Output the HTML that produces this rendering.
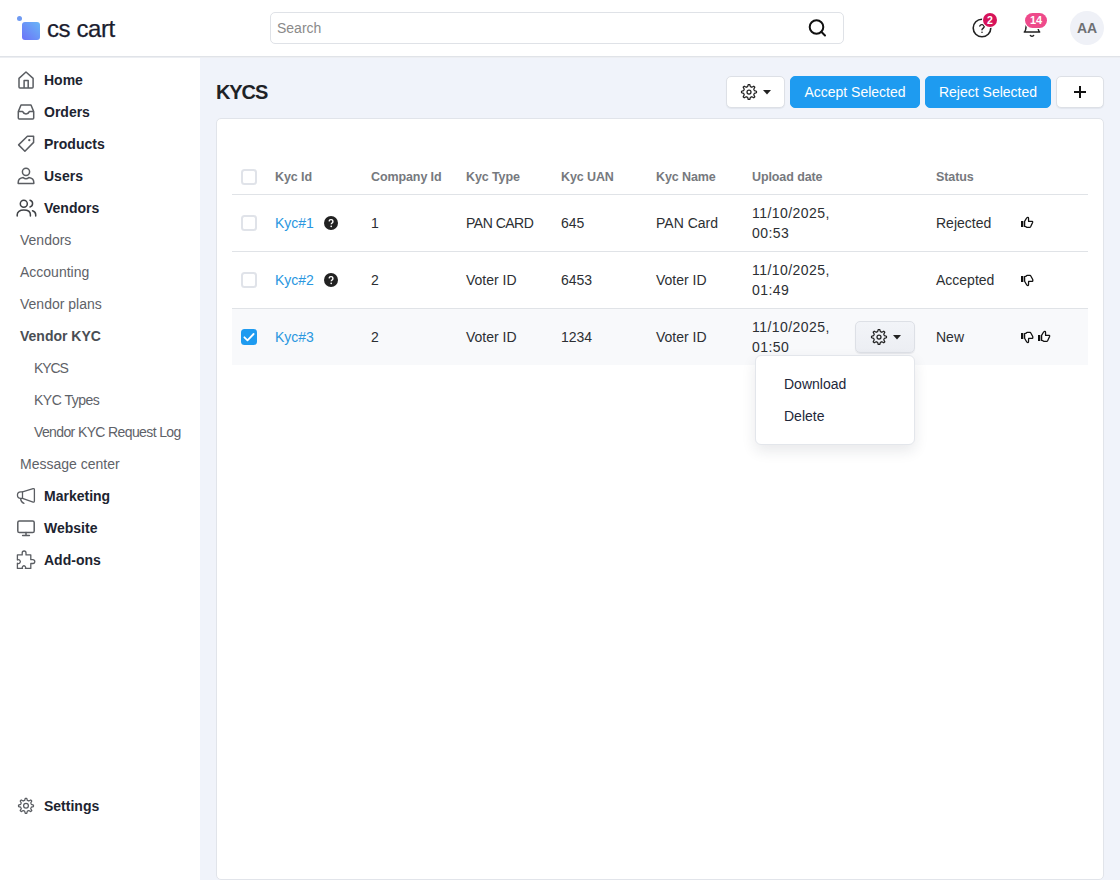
<!DOCTYPE html>
<html><head><meta charset="utf-8">
<style>
*{box-sizing:border-box;margin:0;padding:0}
html,body{width:1120px;height:880px;overflow:hidden}
body{font-family:"Liberation Sans",sans-serif;background:#f0f3fa;position:relative;color:#222}
.abs{position:absolute}
#hdr{left:0;top:0;width:1120px;height:57px;background:#fff;border-bottom:1px solid #e0e3e8;}
#side{left:0;top:57px;width:200px;height:823px;background:#fff}
.logo-dot{left:17px;top:16px;width:5px;height:5px;border-radius:50%;background:#6f9af2}
.logo-sq{left:22px;top:22px;width:18px;height:18px;border-radius:3px;background:linear-gradient(45deg,#6c72f7,#69b6f7)}
.logo-txt{left:47px;top:14.5px;font-size:24px;color:#1b1d2f;letter-spacing:-0.4px;line-height:28px;-webkit-text-stroke:0.25px #1b1d2f}
#search{left:270px;top:12px;width:574px;height:32px;border:1px solid #dfe2e7;border-radius:5px;background:#fff}
#search span{position:absolute;left:6px;top:7px;font-size:14px;color:#8a8a8a;line-height:16px}
.nav{position:absolute;left:44px;font-size:14px;font-weight:bold;color:#1d2430;line-height:16px}
.sub{position:absolute;left:20px;font-size:14px;color:#5e6268;line-height:16px}
.sub2{left:34px}
.ico{position:absolute;left:16px}
h1{position:absolute;left:216px;top:80px;font-size:20px;font-weight:bold;color:#1e2226;line-height:24px;letter-spacing:-1.1px}
.btn{position:absolute;top:76px;height:32px;border-radius:5px;font-size:14px;line-height:30px;text-align:center}
.btn-w{background:#fff;border:1px solid #dde0e6;box-shadow:0 1px 1px rgba(20,30,50,.06)}
.btn-b{background:#1e9bf0;border:1px solid #1e9bf0;color:#fff}
#card{left:216px;top:118px;width:888px;height:762px;background:#fff;border:1px solid #e1e4ea;border-radius:5px}
.th{position:absolute;top:170px;font-size:12.5px;font-weight:bold;color:#76797e;line-height:15px;letter-spacing:-0.1px}
.hline{position:absolute;left:232px;width:856px;height:1px;background:#e0e3e7}
.td{position:absolute;font-size:14px;color:#2c2f33;line-height:16px}
.lnk{color:#2a97df}
.cb{position:absolute;left:241px;width:16px;height:16px;border:2px solid #e0e3e9;border-radius:3.5px;background:#fff}
</style></head><body>
<div id="hdr" class="abs"></div>
<div id="side" class="abs"></div>
<div class="abs" style="left:0;top:57px;width:1120px;height:1px;background:#eceef2"></div>
<div class="abs logo-dot"></div>
<div class="abs logo-sq"></div>
<div class="abs logo-txt">cs cart</div>
<div id="search" class="abs"><span>Search</span></div>

<div class="nav" style="top:72px">Home</div>
<div class="nav" style="top:104px">Orders</div>
<div class="nav" style="top:136px">Products</div>
<div class="nav" style="top:168px">Users</div>
<div class="nav" style="top:200px">Vendors</div>
<div class="sub" style="top:232px">Vendors</div>
<div class="sub" style="top:264px">Accounting</div>
<div class="sub" style="top:296px">Vendor plans</div>
<div class="sub" style="top:328px;font-weight:bold;color:#4a4e54">Vendor KYC</div>
<div class="sub sub2" style="top:360px;letter-spacing:-1.1px">KYCS</div>
<div class="sub sub2" style="top:392px;letter-spacing:-0.5px">KYC Types</div>
<div class="sub sub2" style="top:424px;letter-spacing:-0.62px">Vendor KYC Request Log</div>
<div class="sub" style="top:456px">Message center</div>
<div class="nav" style="top:488px">Marketing</div>
<div class="nav" style="top:520px">Website</div>
<div class="nav" style="top:552px">Add-ons</div>
<div class="nav" style="top:798px">Settings</div>

<h1>KYCS</h1>
<div class="btn btn-w" style="left:726px;width:59px"></div>
<div class="btn btn-b" style="left:790px;width:130px">Accept Selected</div>
<div class="btn btn-b" style="left:925px;width:126px">Reject Selected</div>
<div class="btn btn-w" style="left:1056px;width:48px"></div>

<div id="card" class="abs"></div>
<div class="cb" style="top:169px"></div>
<div class="th" style="left:275px">Kyc Id</div>
<div class="th" style="left:371px">Company Id</div>
<div class="th" style="left:466px">Kyc Type</div>
<div class="th" style="left:561px">Kyc UAN</div>
<div class="th" style="left:656px">Kyc Name</div>
<div class="th" style="left:752px">Upload date</div>
<div class="th" style="left:936px">Status</div>
<div class="hline" style="top:194px"></div>
<div class="hline" style="top:251px"></div>
<div class="hline" style="top:308px"></div>


<!-- header icons -->
<svg class="abs" style="left:806px;top:17px" width="22" height="22" viewBox="0 0 22 22"><circle cx="10.5" cy="10" r="6.8" fill="none" stroke="#111" stroke-width="2"/><line x1="15.3" y1="14.8" x2="19" y2="18.5" stroke="#111" stroke-width="2" stroke-linecap="round"/></svg>
<svg class="abs" style="left:970px;top:16px" width="24" height="24" viewBox="0 0 24 24"><circle cx="12" cy="12" r="8.8" fill="none" stroke="#222" stroke-width="1.6"/><path d="M9.8 10a2.3 2.3 0 0 1 4.4.6c0 1.5-2.2 2-2.2 3.2" fill="none" stroke="#222" stroke-width="1.4" stroke-linecap="round"/><circle cx="12" cy="16.2" r=".8" fill="#222"/></svg>
<div class="abs" style="left:983px;top:13px;width:14px;height:14px;border-radius:7px;background:#d6135a;box-shadow:0 0 0 1px #fff;color:#fff;font-size:10.5px;font-weight:bold;text-align:center;line-height:14px">2</div>
<svg class="abs" style="left:1020px;top:14px" width="24" height="26" viewBox="0 0 24 26" fill="none" stroke="#222" stroke-width="1.5" stroke-linejoin="round" stroke-linecap="round"><path d="M6.8 8L5.7 15.4Q5.3 17.3 4.3 18.1H19.7Q18.7 17.3 18.3 15.4L17.2 8"/><path d="M10.4 21.5Q12 23 13.6 21.5"/></svg>
<div class="abs" style="left:1025px;top:13px;width:22px;height:15px;border-radius:8px;background:#ee4a8b;box-shadow:0 0 0 1px #fff;color:#fff;font-size:11px;font-weight:bold;text-align:center;line-height:15px;letter-spacing:-0.2px">14</div>
<div class="abs" style="left:1070px;top:11px;width:34px;height:34px;border-radius:17px;background:#eff1f7;color:#6e7074;font-size:14px;font-weight:bold;text-align:center;line-height:35px">AA</div>

<!-- sidebar icons -->
<svg class="abs" style="left:16px;top:70px" width="20" height="20" viewBox="0 0 20 20" fill="none" stroke="#5a5d62" stroke-width="1.5" stroke-linejoin="round"><path d="M3 8.4L10 2l7.1 6.4v8.6c0 .6-.4 1-1 1H4c-.6 0-1-.4-1-1z"/><path d="M8.1 17.9V10.4H12.2V17.9"/></svg>
<svg class="abs" style="left:16px;top:102px" width="20" height="20" viewBox="0 0 20 20" fill="none" stroke="#5a5d62" stroke-width="1.5" stroke-linejoin="round"><path d="M5 3h10l2.7 6.6V16c0 .7-.4 1-1 1H3.3c-.6 0-1-.3-1-1V9.6z"/><path d="M2.4 9.6h4.3c.6 1.5 1.7 2.3 3.3 2.3s2.7-.8 3.3-2.3h4.3"/></svg>
<svg class="abs" style="left:16px;top:134px" width="20" height="20" viewBox="0 0 20 20" fill="none" stroke="#5a5d62" stroke-width="1.5" stroke-linejoin="round"><path d="M11.4 2.2h6.2v6.2L8.9 17.2 2.6 10.9z"/><circle cx="13.3" cy="6.2" r="1.15" fill="#5a5d62" stroke="none"/></svg>
<svg class="abs" style="left:16px;top:166px" width="20" height="20" viewBox="0 0 20 20" fill="none" stroke="#5a5d62" stroke-width="1.5" stroke-linejoin="round"><circle cx="10" cy="5.8" r="3.6"/><path d="M7.2 11.6c-2.5.4-5 1.8-5 4.8v1.2h15.6v-1.2c0-3-2.5-4.4-5-4.8-.9.8-1.8 1.2-2.8 1.2s-1.9-.4-2.8-1.2z"/></svg>
<svg class="abs" style="left:16px;top:198px" width="22" height="20" viewBox="0 0 22 20" fill="none" stroke="#3f4246" stroke-width="1.5" stroke-linecap="round" stroke-linejoin="round"><circle cx="7.8" cy="5.7" r="3.5"/><path d="M14 2.3a3.4 3.4 0 0 1 0 6.6"/><path d="M1.2 18v-1.3c0-2.8 2.5-4.7 6.6-4.7s6.6 1.9 6.6 4.7V18"/><path d="M16.5 12.8c2 .6 3.2 2 3.2 3.9V18"/></svg>
<svg class="abs" style="left:12px;top:484px" width="28" height="24" viewBox="0 0 28 24" fill="none" stroke="#5a5d62" stroke-width="1.3" stroke-linejoin="round" stroke-linecap="round"><path d="M10.5 7.8L21.1 4.7Q22.4 4.4 22.4 5.7V17.1Q22.4 18.4 21.1 18.1L10.5 14.3Z"/><path d="M10.5 7.8H8.7a3.25 3.25 0 0 0 0 6.5H10.5"/><path d="M8.6 14.6Q8.8 18.2 12 19.3"/></svg>
<svg class="abs" style="left:16px;top:518px" width="20" height="20" viewBox="0 0 20 20" fill="none" stroke="#5a5d62" stroke-width="1.5" stroke-linejoin="round" stroke-linecap="round"><rect x="1.8" y="3" width="16.4" height="11.6" rx="1.6"/><path d="M10 14.6v3M6.6 17.6h6.8"/></svg>
<svg class="abs" style="left:12px;top:546px" width="28" height="28" viewBox="0 0 28 28" fill="none" stroke="#5a5d62" stroke-width="1.3" stroke-linejoin="round"><path d="M5.4 8.9H10.2V6.9A1.9 1.9 0 0 1 14 6.9V8.9H18.8V13.7H20.9A1.9 1.9 0 0 1 20.9 17.5H18.8V22.4H13.4A1.7 1.7 0 1 0 10.5 22.4H5.4V17.2A1.9 1.9 0 1 0 5.4 14Z"/></svg>
<svg class="abs" style="left:12px;top:792px" width="28" height="28" viewBox="0 0 28 28" fill="none" stroke="#5a5d62" stroke-width="1.25" stroke-linejoin="round"><path d="M12.63 8.47 L13.24 6.34 A7.50 7.50 0 0 1 14.76 6.34 L15.37 8.47 A5.50 5.50 0 0 1 16.80 9.07 L16.80 9.07 L18.74 7.98 A7.50 7.50 0 0 1 19.82 9.06 L18.73 11.00 A5.50 5.50 0 0 1 19.33 12.43 L19.33 12.43 L21.46 13.04 A7.50 7.50 0 0 1 21.46 14.56 L19.33 15.17 A5.50 5.50 0 0 1 18.73 16.60 L18.73 16.60 L19.82 18.54 A7.50 7.50 0 0 1 18.74 19.62 L16.80 18.53 A5.50 5.50 0 0 1 15.37 19.13 L15.37 19.13 L14.76 21.26 A7.50 7.50 0 0 1 13.24 21.26 L12.63 19.13 A5.50 5.50 0 0 1 11.20 18.53 L11.20 18.53 L9.26 19.62 A7.50 7.50 0 0 1 8.18 18.54 L9.27 16.60 A5.50 5.50 0 0 1 8.67 15.17 L8.67 15.17 L6.54 14.56 A7.50 7.50 0 0 1 6.54 13.04 L8.67 12.43 A5.50 5.50 0 0 1 9.27 11.00 L9.27 11.00 L8.18 9.06 A7.50 7.50 0 0 1 9.26 7.98 L11.20 9.07 A5.50 5.50 0 0 1 12.63 8.47 Z"/><circle cx="14" cy="13.8" r="2.4"/></svg>

<!-- toolbar icons -->
<svg class="abs" style="left:740px;top:83px" width="18" height="18" viewBox="0 0 18 18" fill="none" stroke="#222" stroke-width="1.25" stroke-linejoin="round"><path d="M7.63 3.67 L8.24 1.54 A7.50 7.50 0 0 1 9.76 1.54 L10.37 3.67 A5.50 5.50 0 0 1 11.80 4.27 L11.80 4.27 L13.74 3.18 A7.50 7.50 0 0 1 14.82 4.26 L13.73 6.20 A5.50 5.50 0 0 1 14.33 7.63 L14.33 7.63 L16.46 8.24 A7.50 7.50 0 0 1 16.46 9.76 L14.33 10.37 A5.50 5.50 0 0 1 13.73 11.80 L13.73 11.80 L14.82 13.74 A7.50 7.50 0 0 1 13.74 14.82 L11.80 13.73 A5.50 5.50 0 0 1 10.37 14.33 L10.37 14.33 L9.76 16.46 A7.50 7.50 0 0 1 8.24 16.46 L7.63 14.33 A5.50 5.50 0 0 1 6.20 13.73 L6.20 13.73 L4.26 14.82 A7.50 7.50 0 0 1 3.18 13.74 L4.27 11.80 A5.50 5.50 0 0 1 3.67 10.37 L3.67 10.37 L1.54 9.76 A7.50 7.50 0 0 1 1.54 8.24 L3.67 7.63 A5.50 5.50 0 0 1 4.27 6.20 L4.27 6.20 L3.18 4.26 A7.50 7.50 0 0 1 4.26 3.18 L6.20 4.27 A5.50 5.50 0 0 1 7.63 3.67 Z"/><circle cx="9" cy="9" r="2.0"/></svg>
<svg class="abs" style="left:763px;top:90px" width="8" height="5" viewBox="0 0 8 5"><path d="M0 0h8L4 4.5z" fill="#222"/></svg>
<svg class="abs" style="left:1073px;top:85px" width="14" height="14" viewBox="0 0 14 14"><path d="M7 1v12M1 7h12" stroke="#111" stroke-width="2"/></svg>

<!-- rows -->
<div class="abs" style="left:232px;top:309px;width:856px;height:56px;background:#f8f9fb"></div>
<div class="cb" style="top:215px"></div>
<div class="cb" style="top:272px"></div>
<div class="abs" style="left:241px;top:329px;width:16px;height:16px;border-radius:3.5px;background:#1e9bf0"></div>
<svg class="abs" style="left:241px;top:329px" width="16" height="16" viewBox="0 0 16 16"><path d="M3.4 8.3l3.1 3 6.1-6.3" fill="none" stroke="#fff" stroke-width="1.8" stroke-linecap="round" stroke-linejoin="round"/></svg>

<div class="td lnk" style="left:275px;top:215px">Kyc#1</div>
<div class="td lnk" style="left:275px;top:272px">Kyc#2</div>
<div class="td lnk" style="left:275px;top:329px">Kyc#3</div>
<svg class="abs" style="left:324px;top:216px" width="14" height="14" viewBox="0 0 14 14"><circle cx="7" cy="7" r="7" fill="#222"/><path d="M5.1 5.4a1.9 1.9 0 0 1 3.8.3c0 1.2-1.7 1.4-1.7 2.6" fill="none" stroke="#fff" stroke-width="1.4"/><circle cx="7.2" cy="10.3" r=".85" fill="#fff"/></svg>
<svg class="abs" style="left:324px;top:273px" width="14" height="14" viewBox="0 0 14 14"><circle cx="7" cy="7" r="7" fill="#222"/><path d="M5.1 5.4a1.9 1.9 0 0 1 3.8.3c0 1.2-1.7 1.4-1.7 2.6" fill="none" stroke="#fff" stroke-width="1.4"/><circle cx="7.2" cy="10.3" r=".85" fill="#fff"/></svg>
<div class="td" style="left:371px;top:215px">1</div>
<div class="td" style="left:371px;top:272px">2</div>
<div class="td" style="left:371px;top:329px">2</div>
<div class="td" style="left:466px;top:215px;letter-spacing:-0.5px">PAN CARD</div>
<div class="td" style="left:466px;top:272px">Voter ID</div>
<div class="td" style="left:466px;top:329px">Voter ID</div>
<div class="td" style="left:561px;top:215px">645</div>
<div class="td" style="left:561px;top:272px">6453</div>
<div class="td" style="left:561px;top:329px">1234</div>
<div class="td" style="left:656px;top:215px">PAN Card</div>
<div class="td" style="left:656px;top:272px">Voter ID</div>
<div class="td" style="left:656px;top:329px">Voter ID</div>
<div class="td" style="left:752px;top:203px;line-height:20px;letter-spacing:0.45px">11/10/2025,<br>00:53</div>
<div class="td" style="left:752px;top:260px;line-height:20px;letter-spacing:0.45px">11/10/2025,<br>01:49</div>
<div class="td" style="left:752px;top:317px;line-height:20px;letter-spacing:0.45px">11/10/2025,<br>01:50</div>
<div class="td" style="left:936px;top:215px">Rejected</div>
<div class="td" style="left:936px;top:272px">Accepted</div>
<div class="td" style="left:936px;top:329px">New</div>

<div class="abs" style="left:855px;top:321px;width:60px;height:32px;border-radius:5px;background:linear-gradient(#f2f4f8,#eceef3);border:1px solid #dde0e6;box-shadow:0 1px 1px rgba(20,30,50,.08)"></div>
<svg class="abs" style="left:870px;top:328px" width="18" height="18" viewBox="0 0 18 18" fill="none" stroke="#222" stroke-width="1.25" stroke-linejoin="round"><path d="M7.63 3.67 L8.24 1.54 A7.50 7.50 0 0 1 9.76 1.54 L10.37 3.67 A5.50 5.50 0 0 1 11.80 4.27 L11.80 4.27 L13.74 3.18 A7.50 7.50 0 0 1 14.82 4.26 L13.73 6.20 A5.50 5.50 0 0 1 14.33 7.63 L14.33 7.63 L16.46 8.24 A7.50 7.50 0 0 1 16.46 9.76 L14.33 10.37 A5.50 5.50 0 0 1 13.73 11.80 L13.73 11.80 L14.82 13.74 A7.50 7.50 0 0 1 13.74 14.82 L11.80 13.73 A5.50 5.50 0 0 1 10.37 14.33 L10.37 14.33 L9.76 16.46 A7.50 7.50 0 0 1 8.24 16.46 L7.63 14.33 A5.50 5.50 0 0 1 6.20 13.73 L6.20 13.73 L4.26 14.82 A7.50 7.50 0 0 1 3.18 13.74 L4.27 11.80 A5.50 5.50 0 0 1 3.67 10.37 L3.67 10.37 L1.54 9.76 A7.50 7.50 0 0 1 1.54 8.24 L3.67 7.63 A5.50 5.50 0 0 1 4.27 6.20 L4.27 6.20 L3.18 4.26 A7.50 7.50 0 0 1 4.26 3.18 L6.20 4.27 A5.50 5.50 0 0 1 7.63 3.67 Z"/><circle cx="9" cy="9" r="2.0"/></svg>
<svg class="abs" style="left:893px;top:335px" width="8" height="5" viewBox="0 0 8 5"><path d="M0 0h8L4 4.5z" fill="#222"/></svg>

<!-- dropdown -->
<div class="abs" style="left:755px;top:355px;width:160px;height:90px;background:#fff;border:1px solid #e3e6eb;border-radius:6px;box-shadow:0 6px 14px rgba(30,40,60,.10)"></div>
<div class="td" style="left:784px;top:376px;color:#22273a">Download</div>
<div class="td" style="left:784px;top:408px;color:#22273a">Delete</div>
<svg class="abs" style="left:1016px;top:212px" width="24" height="20" viewBox="0 0 24 20"><rect x="5" y="9" width="2" height="6" fill="#111"/><rect x="7" y="9" width="1" height="6" fill="#aaa"/><path d="M8.6 9.3L10.6 6Q11 5.3 11.8 5.3Q12.5 5.3 12.5 6L12.6 9.4H16.2Q16.9 9.5 16.6 10.4L14.6 14.8Q14.3 15.4 13.7 15.4H11Q10.3 15.4 10 14.7L8.6 14.3Z" fill="#fff" stroke="#111" stroke-width="1.3" stroke-linejoin="round"/></svg>
<svg class="abs" style="left:1016px;top:269px" width="24" height="20" viewBox="0 0 24 20"><rect x="5" y="7" width="2" height="6" fill="#111"/><rect x="7" y="7" width="1" height="6" fill="#aaa"/><path d="M8.6 7.6L10.2 7.2Q10.6 6.4 11.2 6.4H14Q14.5 6.5 14.8 7L16.6 10.2Q16.8 10.6 16.8 11.2V11.8Q16.8 12.4 16.2 12.4H12.6L12.5 15.8Q12.4 16.6 11.7 16.6Q11 16.6 10.6 15.8L8.6 12.3Z" fill="#fff" stroke="#111" stroke-width="1.3" stroke-linejoin="round"/></svg>
<svg class="abs" style="left:1016px;top:326px" width="24" height="20" viewBox="0 0 24 20"><rect x="5" y="7" width="2" height="6" fill="#111"/><rect x="7" y="7" width="1" height="6" fill="#aaa"/><path d="M8.6 7.6L10.2 7.2Q10.6 6.4 11.2 6.4H14Q14.5 6.5 14.8 7L16.6 10.2Q16.8 10.6 16.8 11.2V11.8Q16.8 12.4 16.2 12.4H12.6L12.5 15.8Q12.4 16.6 11.7 16.6Q11 16.6 10.6 15.8L8.6 12.3Z" fill="#fff" stroke="#111" stroke-width="1.3" stroke-linejoin="round"/></svg>
<svg class="abs" style="left:1033px;top:326px" width="24" height="20" viewBox="0 0 24 20"><rect x="5" y="9" width="2" height="6" fill="#111"/><rect x="7" y="9" width="1" height="6" fill="#aaa"/><path d="M8.6 9.3L10.6 6Q11 5.3 11.8 5.3Q12.5 5.3 12.5 6L12.6 9.4H16.2Q16.9 9.5 16.6 10.4L14.6 14.8Q14.3 15.4 13.7 15.4H11Q10.3 15.4 10 14.7L8.6 14.3Z" fill="#fff" stroke="#111" stroke-width="1.3" stroke-linejoin="round"/></svg>
</body></html>
